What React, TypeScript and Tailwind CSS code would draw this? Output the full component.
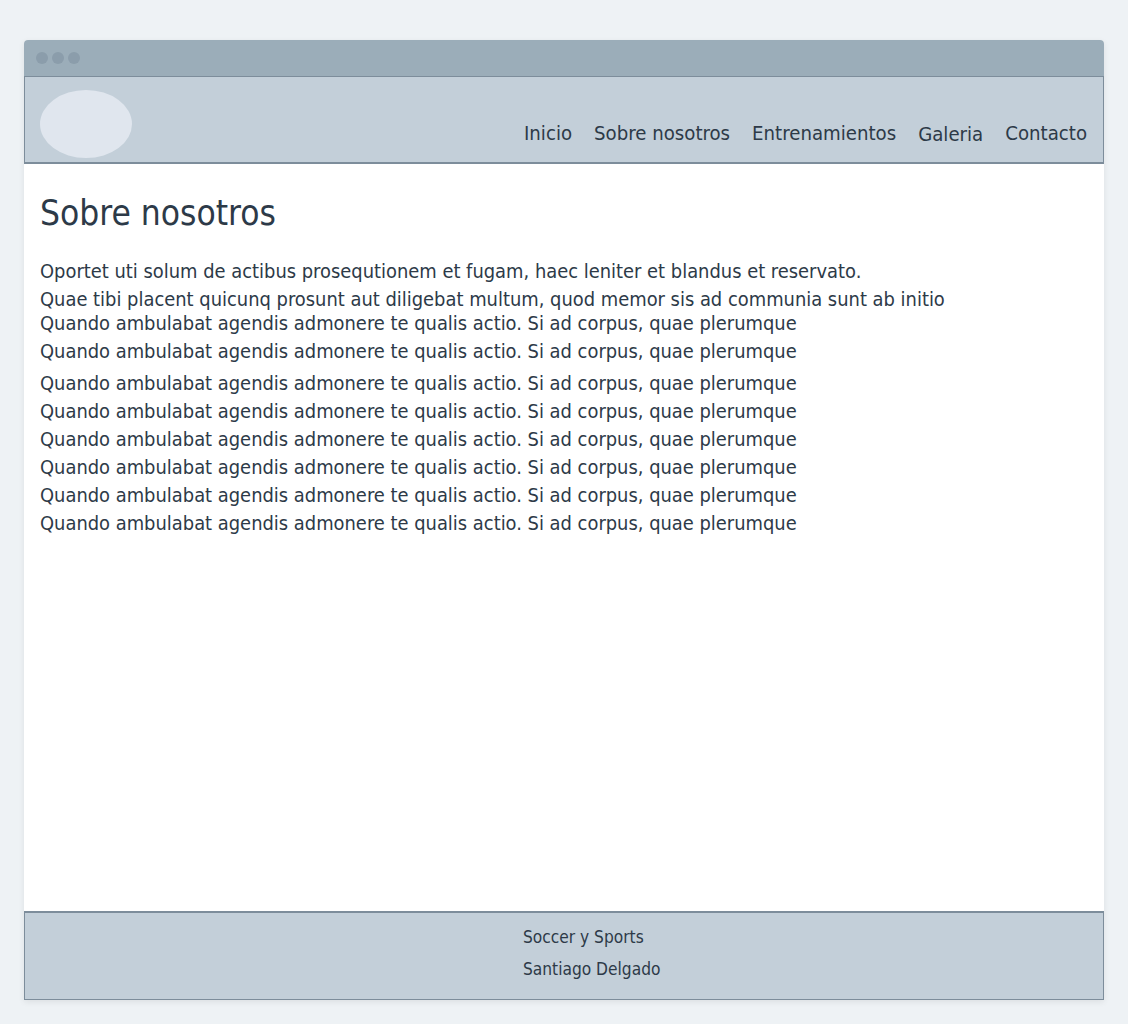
import React from "react";

const font = { fontFamily: '"DejaVu Sans Condensed", "DejaVu Sans", sans-serif' };

export default function App() {
  const q = "Quando ambulabat agendis admonere te qualis actio. Si ad corpus, quae plerumque";
  return (
    <div className="min-h-screen w-full bg-[#eef2f5] pt-10 pb-6 px-6" style={font}>
      <div className="flex flex-col h-[960px] rounded-t-[4px] overflow-hidden bg-white shadow-[0_2px_6px_rgba(0,0,0,0.08)]">
        <div className="h-[37px] shrink-0 bg-[#9badb9] flex items-center gap-1 px-3 border-b border-[#7d8d9b]">
          <span className="w-3 h-3 rounded-full bg-[#8b9dab]" />
          <span className="w-3 h-3 rounded-full bg-[#8b9dab]" />
          <span className="w-3 h-3 rounded-full bg-[#8b9dab]" />
        </div>
        <header className="h-[87px] shrink-0 bg-[#c3cfd9] border-x border-[#7d8d9b] border-b-2 flex items-center justify-between pl-[15px] pr-4">
          <div className="w-[92px] h-[68px] mt-[8px] rounded-[50%] bg-[#e0e6ee]" />
          <nav className="flex items-center gap-[22px] text-[20.2px] text-[#2d3a48] pt-[27px]">
            <span>Inicio</span>
            <span>Sobre nosotros</span>
            <span>Entrenamientos</span>
            <span className="pt-[2px]">Galeria</span>
            <span>Contacto</span>
          </nav>
        </header>
        <main className="flex-1 px-4 pt-[26px] text-[#2d3a48]">
          <h1 className="text-[35px] leading-[46px]">Sobre nosotros</h1>
          <div className="mt-[22px] text-[19.9px] leading-[28px]">
            <p>Oportet uti solum de actibus prosequtionem et fugam, haec leniter et blandus et reservato.</p>
            <p className="-mb-1">Quae tibi placent quicunq prosunt aut diligebat multum, quod memor sis ad communia sunt ab initio</p>
            <p>{q}</p>
            <p className="mb-1">{q}</p>
            <p>{q}</p>
            <p>{q}</p>
            <p>{q}</p>
            <p>{q}</p>
            <p>{q}</p>
            <p>{q}</p>
          </div>
        </main>
        <footer className="h-[89px] shrink-0 bg-[#c3cfd9] border border-t-2 border-[#7d8d9b] flex flex-col pl-[498px] pt-[13px] text-[17.2px] text-[#2d3a48]">
          <div className="flex flex-col gap-[10px]">
            <span className="leading-[22px]">Soccer y Sports</span>
            <span className="leading-[22px]">Santiago Delgado</span>
          </div>
        </footer>
      </div>
    </div>
  );
}
